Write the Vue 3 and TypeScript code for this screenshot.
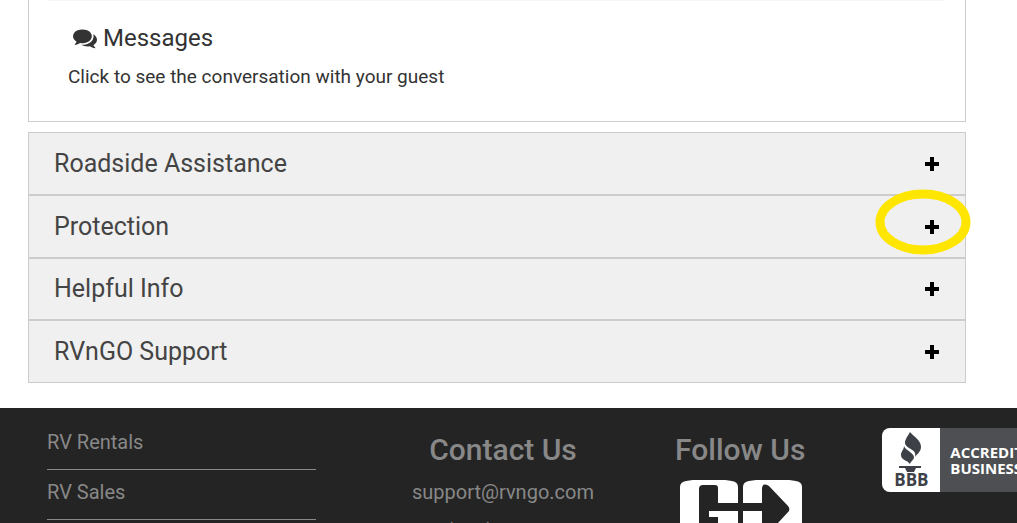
<script setup lang="ts">
interface Section {
  title: string
  marked?: boolean
}

const sections: Section[] = [
  { title: 'Roadside Assistance' },
  { title: 'Protection', marked: true },
  { title: 'Helpful Info' },
  { title: 'RVnGO Support' },
]

const links: string[] = ['RV Rentals', 'RV Sales']
</script>

<template>
  <div class="page">
    <main class="content">
      <section class="card">
        <hr class="divider" />
        <h2 class="card-title">
          <svg class="chat" viewBox="0 0 1792 1792" aria-hidden="true">
            <path
              d="M1408 768q0 139-94 257t-256.500 186.500-353.500 68.500q-86 0-176-16-124 88-278 128-36 9-86 16h-3q-11 0-20.500-8t-11.500-21q-1-3-1-6.500t.5-6.500 2-6l2.500-5 3.500-5.500 4-5 4.500-5 4-4.500q5-6 23-25t26-29.500 22.500-29 25-38.500 20.500-44q-124-72-195-177t-71-224q0-139 94-257t256.500-186.500 353.500-68.500 353.500 68.500 256.500 186.500 94 257zm384 256q0 120-71 224.500t-195 176.500q10 24 20.500 44t25 38.500 22.500 29 26 29.500 23 25q1 1 4 4.500t4.500 5 4 5 3.500 5.500l2.500 5 2 6 .5 6.500-1 6.500q-3 14-13 22t-22 7q-50-7-86-16-154-40-278-128-90 16-176 16-271 0-472-132 58 4 88 4 161 0 309-45t264-129q125-92 192-212t67-254q0-77-23-152 129 71 204 178t75 230z"
            />
          </svg>
          <span>Messages</span>
        </h2>
        <p class="card-text">Click to see the conversation with your guest</p>
      </section>

      <div class="accordion">
        <button v-for="s in sections" :key="s.title" type="button" class="row">
          <span>{{ s.title }}</span>
          <span class="toggle">
            <svg class="plus" viewBox="0 0 14 14" aria-hidden="true">
              <path d="M5 0h4v5h5v4H9v5H5V9H0V5h5z" />
            </svg>
            <svg v-if="s.marked" class="ring" viewBox="0 0 96 66" aria-hidden="true">
              <ellipse cx="48" cy="33" rx="43" ry="28" />
            </svg>
          </span>
        </button>
      </div>
    </main>

    <footer class="footer">
      <nav class="links">
        <a v-for="l in links" :key="l" href="#">{{ l }}</a>
      </nav>
      <div class="contact">
        <h3>Contact Us</h3>
        <a href="mailto:support@rvngo.com">support@rvngo.com</a>
        <a href="#">+1(800) 000-0000</a>
      </div>
      <div class="follow">
        <h3>Follow Us</h3>
        <svg class="go" viewBox="-1 2 124 80" role="img" aria-label="GO">
          <path
            fill="#fff"
            d="M1 82V9Q1 4 7 3Q30-1 53 3Q59 4 59 9V25H39V10Q39 7 36 7H24Q20 7 20 11V82ZM30 33H59V82H39V39H30Z"
          />
          <path
            fill="#fff"
            fill-rule="evenodd"
            d="M64 25V9Q64 4 70 3Q94-1 117 3Q123 4 123 9V82H64V33H83V54L87 58L110 33Q111 30 109 28L90 8Q83 4 83 11V25Z"
          />
        </svg>
      </div>
      <a class="bbb" href="#" aria-label="BBB Accredited Business">
        <span class="seal">
          <svg class="torch" viewBox="0 0 24 40" aria-hidden="true">
            <path d="M11 0C15 5 22 8 22 15C22 20 17 23 16 25C17 20 15 19 10 16C2 11 8 6 11 0Z" />
            <path d="M5 14C7 19 14 20 15 25C15 28 12 29 11 32C8 28 2 28 2 23C2 19 5 18 5 14Z" />
            <path d="M0 34H22V36H17L15 40H8L6 36H0Z" />
          </svg>
          <span class="bbb-name">BBB</span>
        </span>
        <span class="bbb-text">ACCREDITED<br />BUSINESS</span>
      </a>
    </footer>
  </div>
</template>

<style>
body {
  margin: 0;
  background: #fff;
}
html {
  overflow: hidden;
}
</style>

<style scoped>
.page {
  font-family: Roboto, "Liberation Sans", sans-serif;
  color: #333;
}
.content {
  margin: 0 51px 0 28px;
}
.card {
  box-sizing: border-box;
  padding: 0 20px 33px;
  border: 1px solid #ccc;
  border-top: 0;
}
.divider {
  height: 1px;
  margin: 0 0 21px;
  border: 0;
  background: #f5f5f5;
}
.card-title {
  display: flex;
  align-items: center;
  gap: 6px;
  margin: 0 0 11px 24px;
  font-size: 24px;
  line-height: 32px;
  font-weight: 400;
}
.chat {
  width: 24px;
  height: 24px;
  fill: #333;
}
.card-text {
  margin: 0 0 0 19px;
  font-size: 19px;
  line-height: 23px;
}
.accordion {
  display: grid;
  grid-auto-rows: 1fr;
  min-height: 251px;
  margin: 10px 0 25px;
}
.row {
  display: flex;
  align-items: center;
  justify-content: space-between;
  padding: 1px 26px 0 25px;
  border: 1px solid #ccc;
  border-radius: 0;
  background: #f0f0f0;
  color: #444;
  font: 400 25px/30px Roboto, "Liberation Sans", sans-serif;
  text-align: left;
}
.toggle {
  position: relative;
  display: flex;
}
.plus {
  width: 14px;
  height: 14px;
  fill: #000;
}
.ring {
  position: absolute;
  top: -31px;
  left: -50px;
  z-index: 1;
  width: 96px;
  height: 66px;
  fill: none;
  stroke: #ffe600;
  stroke-width: 9px;
}
.footer {
  display: flex;
  align-items: flex-start;
  height: 115px;
  padding-left: 47px;
  overflow: hidden;
  background: #242424;
  color: #888;
}
.footer a {
  flex-shrink: 0;
  color: #888;
  text-decoration: none;
}
.links {
  display: flex;
  flex: 0 0 269px;
  flex-direction: column;
  margin-right: 96px;
  padding-top: 12px;
}
.links a {
  padding: 10px 0 15px;
  border-bottom: 1px solid #888;
  font-size: 20px;
  line-height: 24px;
}
.contact,
.follow {
  display: flex;
  flex-direction: column;
  flex-shrink: 0;
  align-items: center;
  padding-top: 24px;
  font-size: 20px;
  line-height: 24px;
}
.contact {
  margin-right: 81px;
}
.contact a {
  margin-bottom: 15px;
}
.follow {
  margin-right: 77px;
}
.footer h3 {
  margin: 0 0 12px;
  font-size: 30px;
  line-height: 36px;
  font-weight: 500;
  white-space: nowrap;
}
.go {
  width: 124px;
  height: 80px;
}
.bbb {
  display: flex;
  width: 180px;
  height: 64px;
  margin-top: 20px;
  border-radius: 8px;
  background: #4d4f53;
  overflow: hidden;
}
.seal {
  display: flex;
  flex-direction: column;
  align-items: center;
  width: 58px;
  background: #fff;
}
.torch {
  width: 24px;
  height: 40px;
  margin-top: 4px;
  fill: #3d4147;
}
.bbb-name {
  color: #3d4147;
  font: 700 17px/16px "Open Sans", sans-serif;
}
.bbb-text {
  padding: 16px 0 0 10px;
  color: #fff;
  font: 700 15px/16px "Open Sans", sans-serif;
}
</style>
